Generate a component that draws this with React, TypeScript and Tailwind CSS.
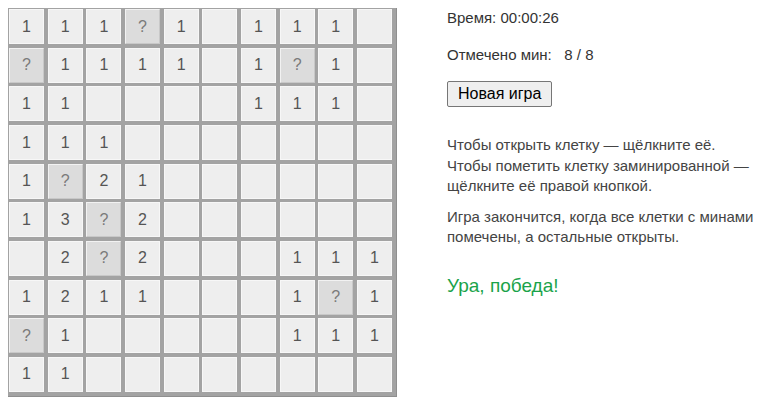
const board = [
  "111?1_111_",
  "?1111_1?1_",
  "11____111_",
  "111_______",
  "1?21______",
  "13?2______",
  "_2?2___111",
  "1211___1?1",
  "?1_____111",
  "11________",
];

function Cell({ v }: { v: string }) {
  if (v === "?") {
    return (
      <div className="flex items-center justify-center bg-[#dcdcdc] border border-t-[#f2f2f2] border-l-[#f2f2f2] border-r-[#c8c8c8] border-b-[#c8c8c8] text-[#7a7a7a] text-[16px]">
        ?
      </div>
    );
  }
  return (
    <div className="flex items-center justify-center bg-[#eeeeee] border border-[#f7f7f7] text-[#555] text-[16px]">
      {v === "_" ? "" : v}
    </div>
  );
}

export default function App() {
  return (
    <div className="flex p-2 font-['Liberation_Sans',Arial,sans-serif] bg-white min-h-[405px]">
      {/* board */}
      <div className="w-[389px] h-[389px] shrink-0 bg-[#a3a3a3] pt-px pl-px pr-[4px] pb-[4px] border-r border-b border-r-[#8f8f8f] border-b-[#8f8f8f]">
        <div className="grid grid-cols-10 grid-rows-10 gap-[3.5px] w-full h-full">
          {board.map((row, r) =>
            row.split("").map((v, c) => <Cell key={`${r}-${c}`} v={v} />)
          )}
        </div>
      </div>

      {/* side panel */}
      <div className="ml-[50px] text-[15px] text-[#333]">
        <p className="leading-[20px]">Время: 00:00:26</p>
        <p className="mt-[17px] leading-[20px]">
          Отмечено мин:&nbsp;&nbsp; 8 / 8
        </p>
        <button className="mt-[16px] h-[26px] px-[10px] text-[16px] text-black bg-[#efefef] border border-[#767676] rounded-[2px]">
          Новая игра
        </button>
        <div className="mt-[28px] text-[#444] leading-[20.5px] w-[312px]">
          <p>
            Чтобы открыть клетку — щёлкните её.
            <br />
            Чтобы пометить клетку заминированной — щёлкните её правой кнопкой.
          </p>
          <p className="mt-[10px]">
            Игра закончится, когда все клетки с минами помечены, а остальные
            открыты.
          </p>
        </div>
        <p className="mt-[27px] text-[19px] leading-[22px] text-[#1aa34a]">
          Ура, победа!
        </p>
      </div>
    </div>
  );
}
